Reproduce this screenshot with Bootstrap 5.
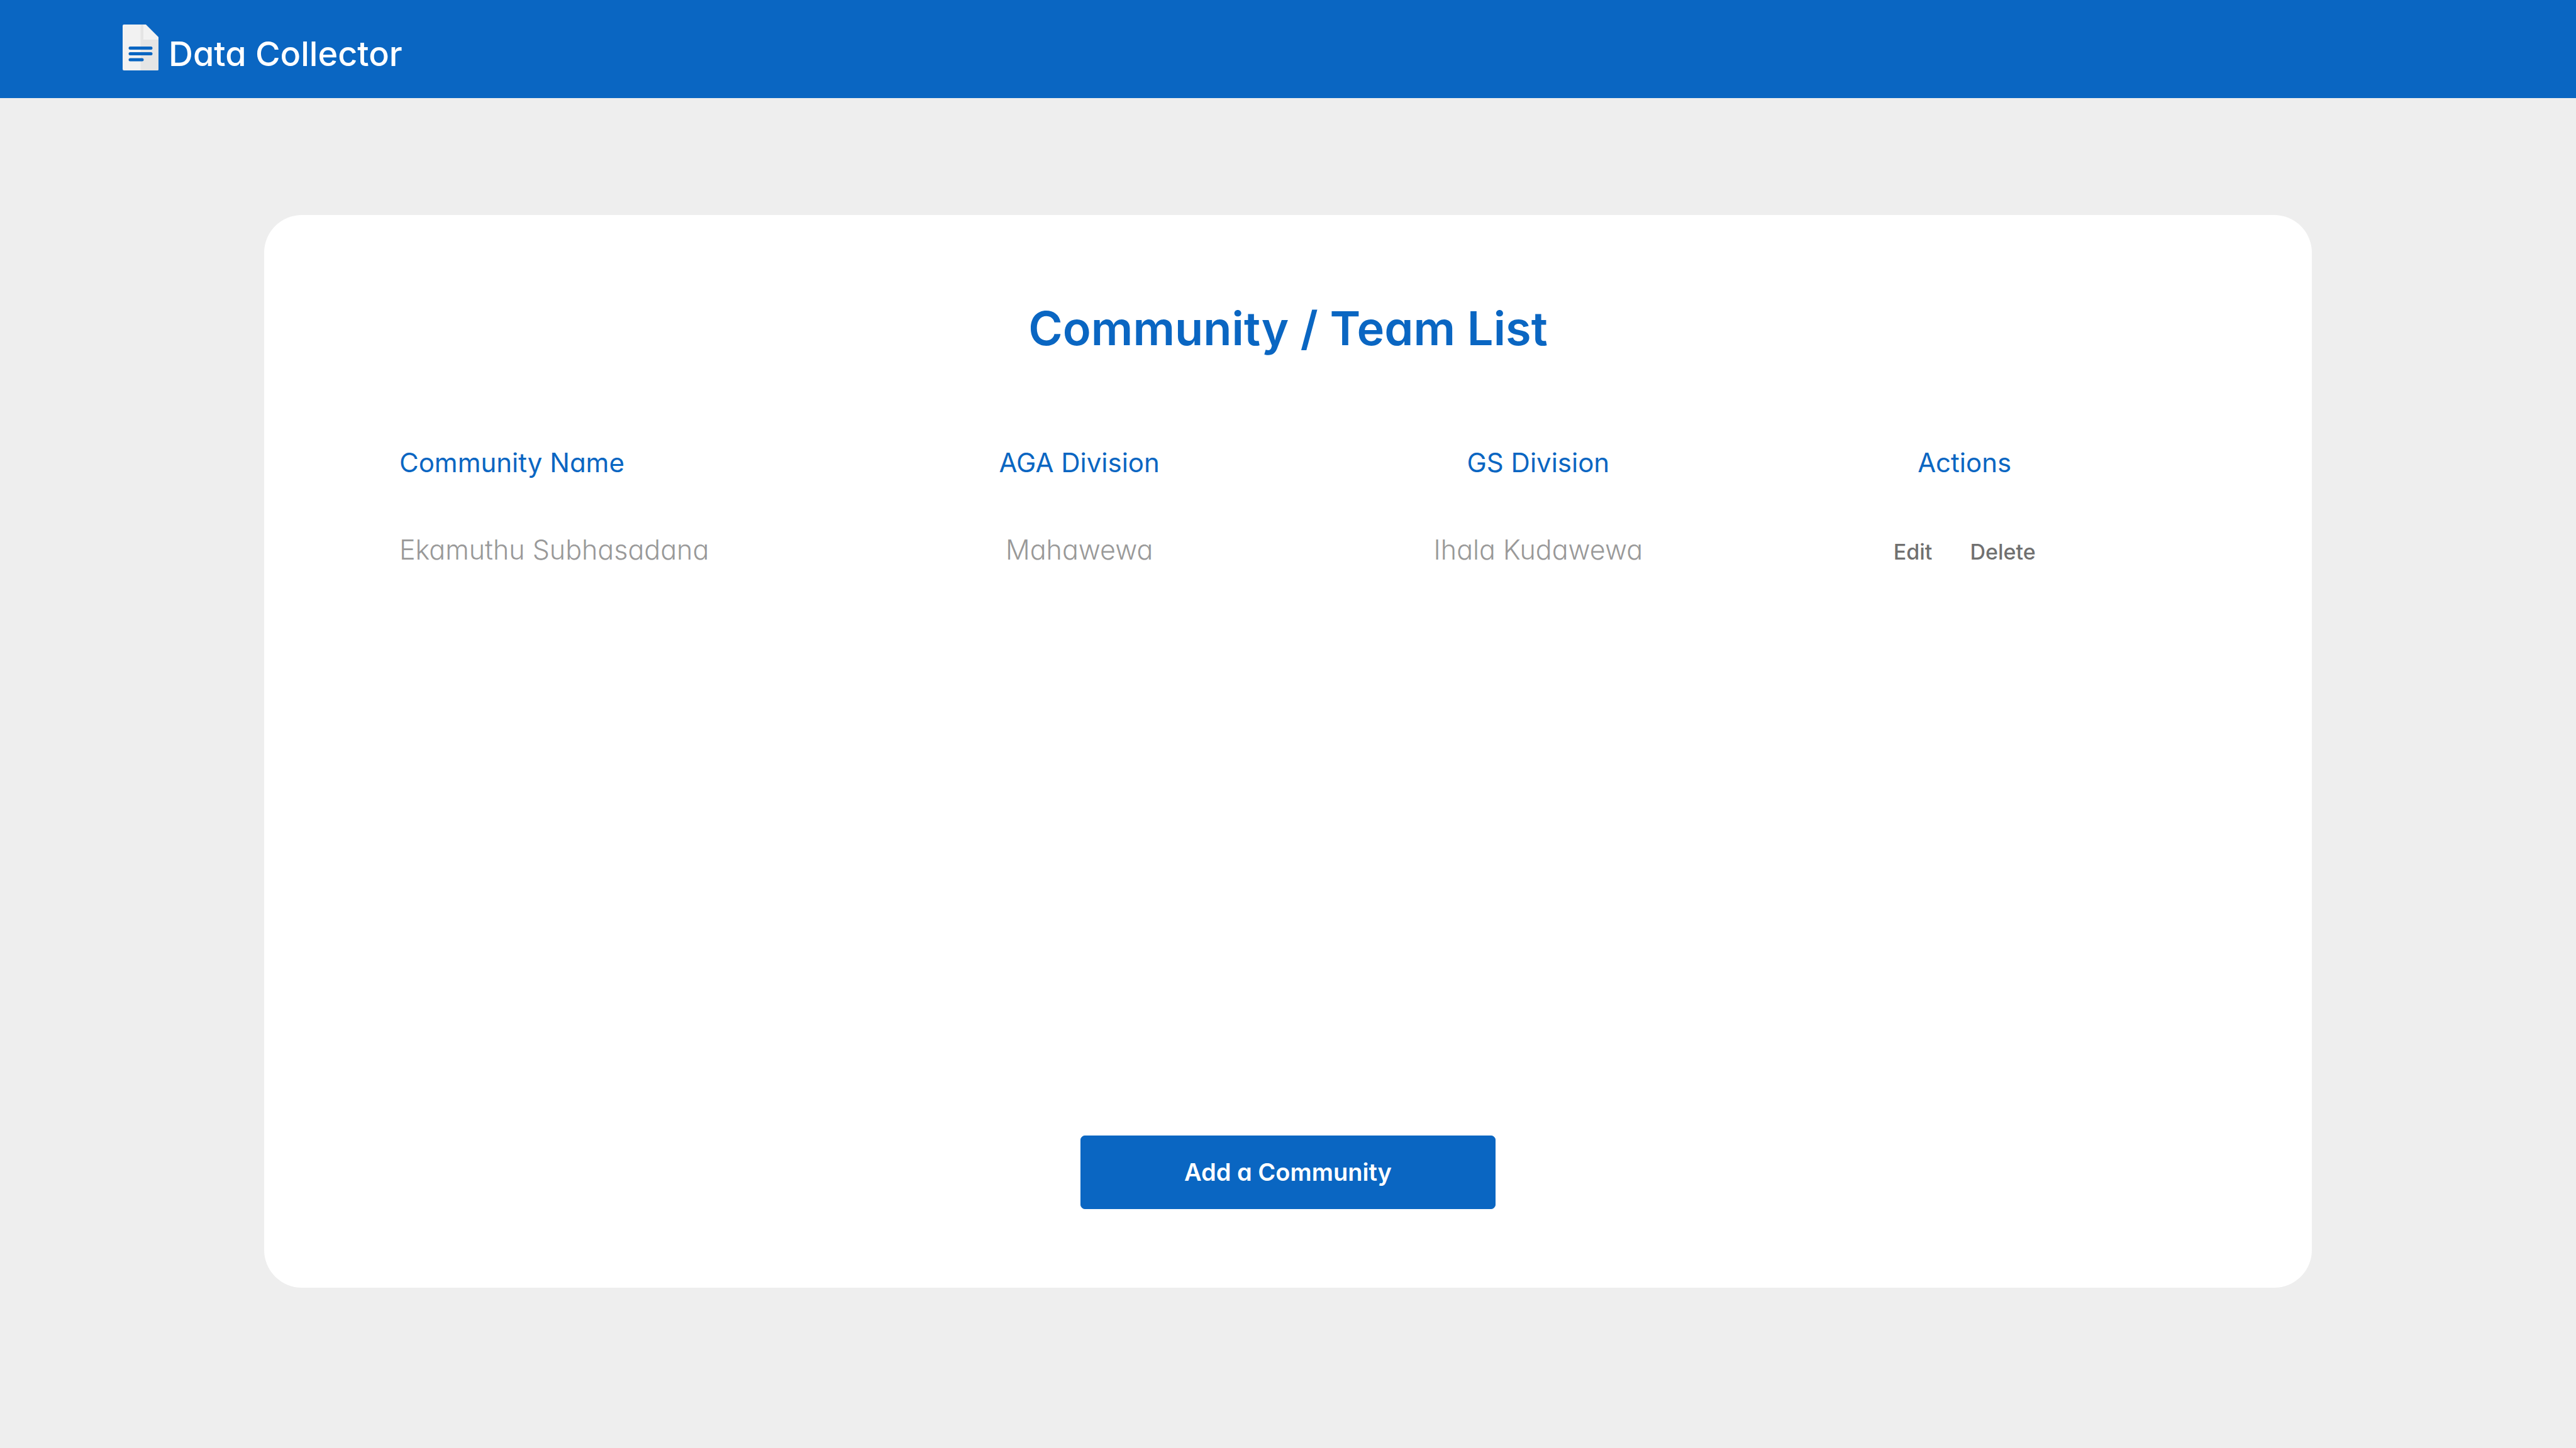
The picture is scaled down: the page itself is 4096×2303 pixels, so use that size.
<!DOCTYPE html>
<html lang="en">
<head>
<meta charset="utf-8">
<meta name="viewport" content="width=device-width, initial-scale=1">
<title>Data Collector</title>
<link href="https://cdn.jsdelivr.net/npm/bootstrap@5.3.0/dist/css/bootstrap.min.css" rel="stylesheet">
<style>
  :root { --brand: #0a66c2; }
  body {
    background: #eeeeee;
    font-family: Inter, "Open Sans", "Liberation Sans", sans-serif;
  }
  /* single-storey "a" */
  body, .btn { font-feature-settings: "cv11"; }
  .topbar { background: var(--brand); padding: 39px 195px 44px; }
  .topbar .navbar-brand { gap: 16px; font-size: 54px; line-height: 52px; font-weight: 500; }
  .topbar svg { width: 57px; height: 73px; }
  .page-main { padding: 186px 420px; }
  .panel { border-radius: 60px; min-height: 1706px; padding: 131px 240px 125px 215px; }
  .panel-title { color: var(--brand); font-size: 74px; line-height: 98px; font-weight: 600; margin-bottom: 135px; margin-left: 25px; }
  .team-table { --bs-table-bg: transparent; table-layout: fixed; }
  .team-table th, .team-table td { padding: 0; font-size: 42px; line-height: 60px; vertical-align: baseline; }
  .team-table th { color: var(--brand); font-weight: 400; padding-bottom: 78px; }
  .team-table td { color: #999999; font-size: 43px; font-weight: 300; }
  .w-name { width: 25.6%; }
  .w-aga { width: 26%; }
  .w-gs { width: 26.1%; }
  .row-btn { color: #707070; font-size: 34px; line-height: 60px; font-weight: 500; }
  .row-actions { gap: 60px; }
  .add-btn { --bs-btn-bg: var(--brand); --bs-btn-border-color: var(--brand); --bs-btn-border-radius: 7px; --bs-btn-font-size: 38px; --bs-btn-font-weight: 600; width: 660px; height: 117px; margin-left: 25px; }
</style>
</head>
<body>
<nav class="navbar topbar">
  <a class="navbar-brand d-flex align-items-end text-white m-0 p-0" href="#">
    <svg viewBox="0 0 57 73" aria-hidden="true">
      <path d="M2 0H37L57 20V71a2 2 0 0 1-2 2H2a2 2 0 0 1-2-2V2a2 2 0 0 1 2-2z" fill="#f2f2f2"/>
      <path d="M28.500 0H33V24H57V71a2 2 0 0 1-2 2H28.500z" fill="#e5e5e5"/>
      <path d="M12 37.500H45M12 46.500H45M12 56H31" stroke="#0a66c2" stroke-width="5" stroke-linecap="round"/>
    </svg>
    <span>Data Collector</span>
  </a>
</nav>
<main class="page-main">
  <section class="panel bg-white d-flex flex-column">
    <h1 class="panel-title text-center">Community / Team List</h1>
    <table class="table table-borderless team-table mb-0">
      <thead>
        <tr>
          <th class="w-name" scope="col">Community Name</th>
          <th class="w-aga text-center" scope="col">AGA Division</th>
          <th class="w-gs text-center" scope="col">GS Division</th>
          <th class="text-center" scope="col">Actions</th>
        </tr>
      </thead>
      <tbody>
        <tr>
          <td>Ekamuthu Subhasadana</td>
          <td class="text-center">Mahawewa</td>
          <td class="text-center">Ihala Kudawewa</td>
          <td>
            <div class="row-actions d-flex justify-content-center">
              <button type="button" class="row-btn btn p-0 border-0">Edit</button>
              <button type="button" class="row-btn btn p-0 border-0">Delete</button>
            </div>
          </td>
        </tr>
      </tbody>
    </table>
    <button type="button" class="add-btn btn btn-primary mt-auto align-self-center">Add a Community</button>
  </section>
</main>
<script src="https://cdn.jsdelivr.net/npm/bootstrap@5.3.0/dist/js/bootstrap.bundle.min.js"></script>
</body>
</html>
